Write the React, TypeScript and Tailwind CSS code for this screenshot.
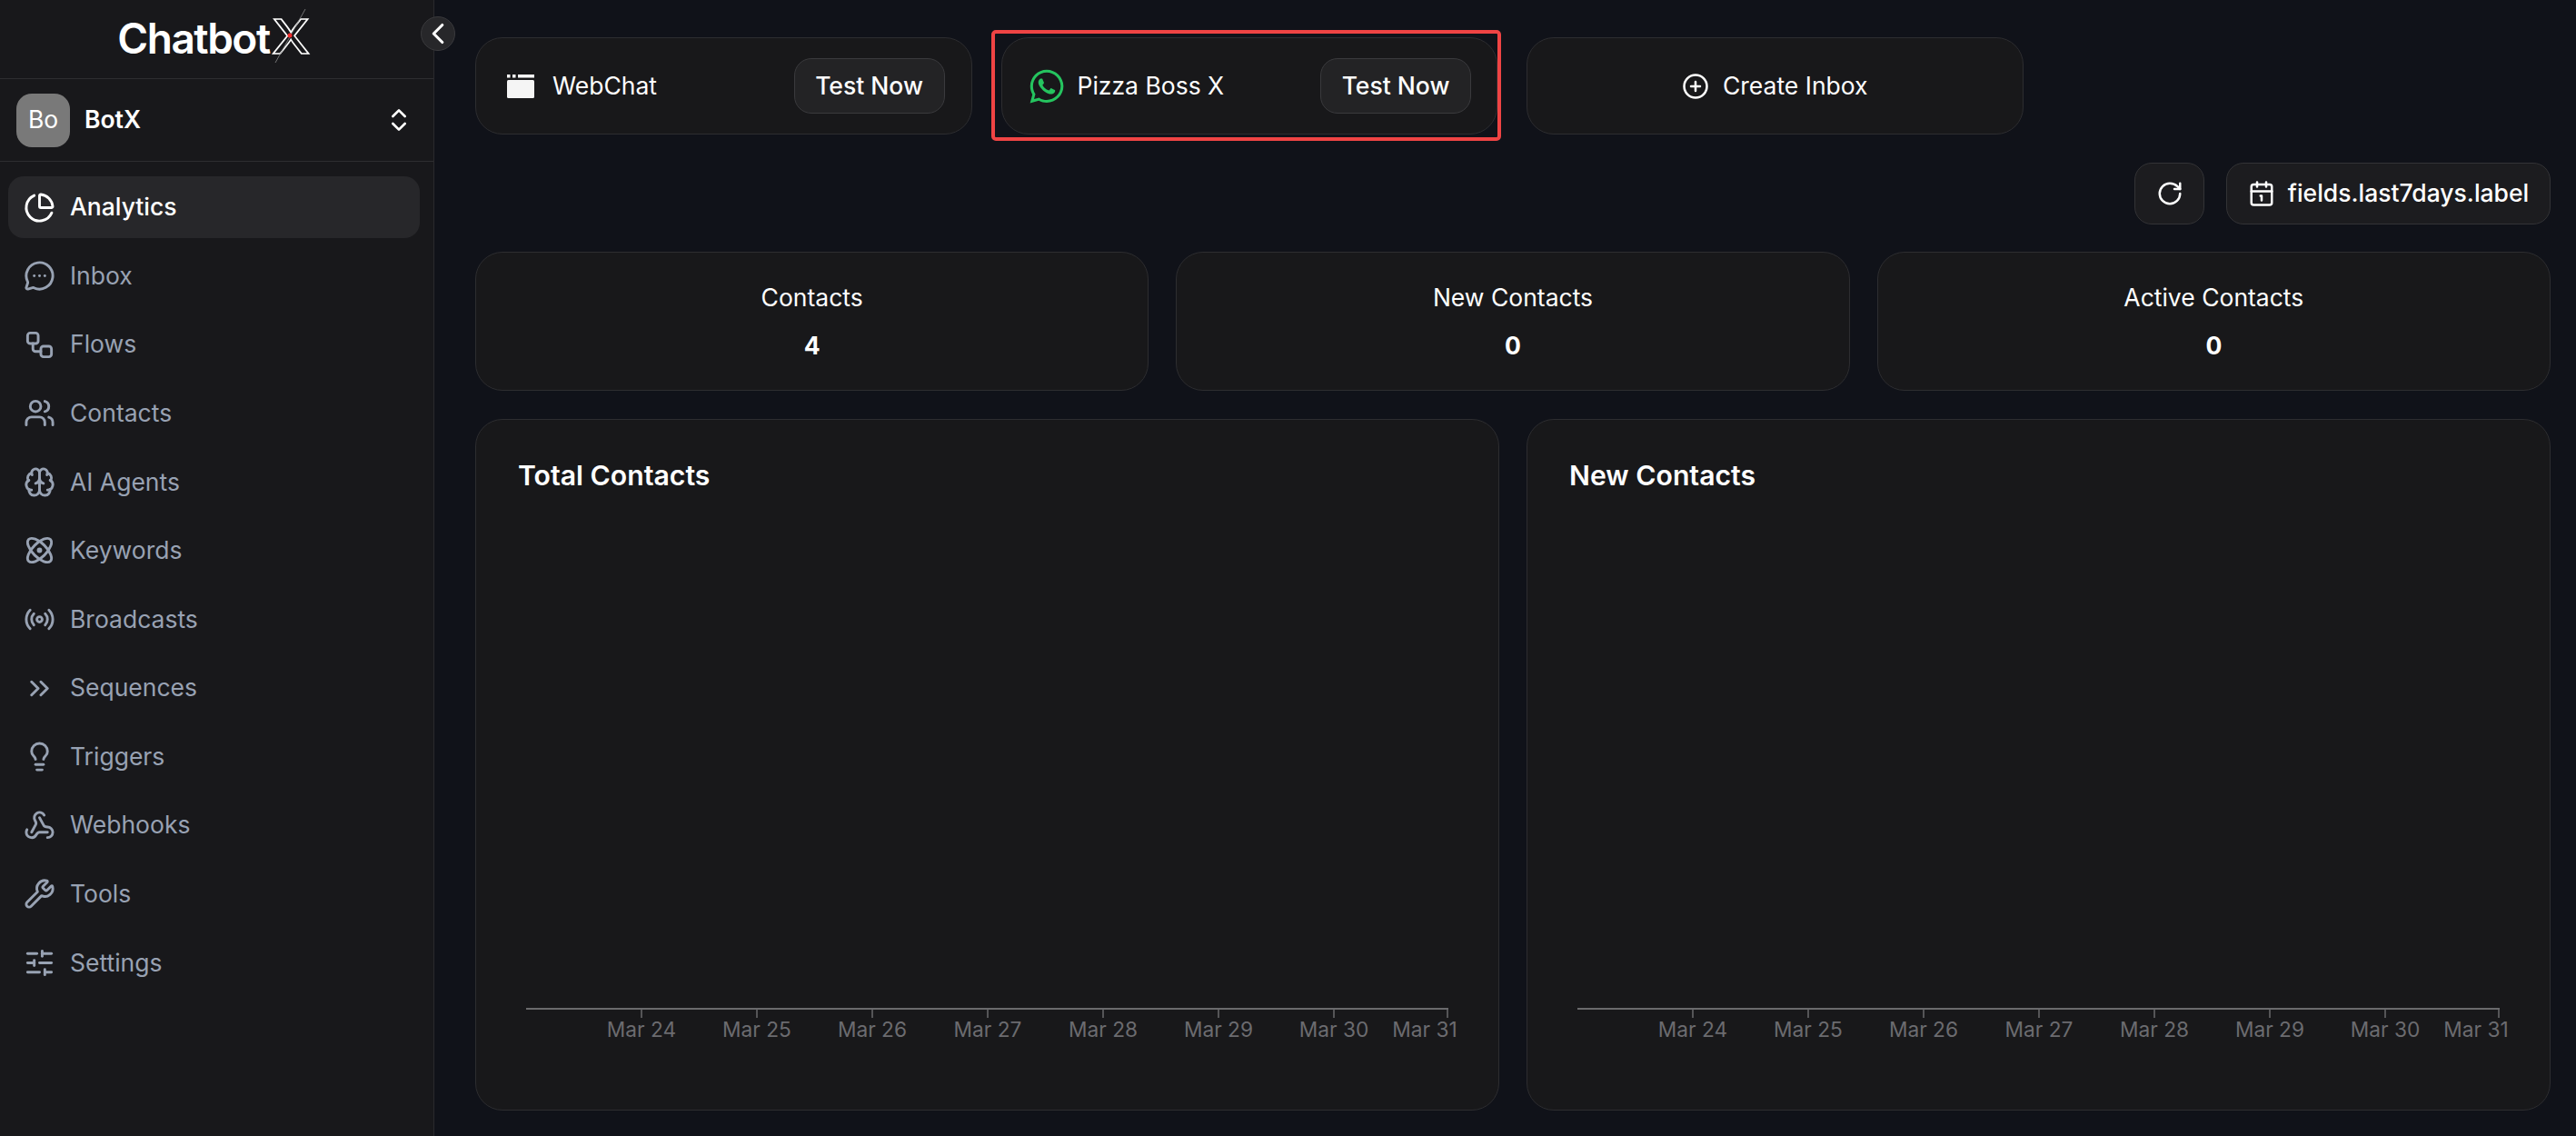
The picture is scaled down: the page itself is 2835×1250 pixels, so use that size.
import {
  Atom,
  Brain,
  Calendar1,
  ChartPie,
  ChevronLeft,
  ChevronsRight,
  ChevronsUpDown,
  CirclePlus,
  Lightbulb,
  MessageCircleMore,
  Radio,
  RotateCw,
  SlidersHorizontal,
  Users,
  Webhook,
  Workflow,
  Wrench,
} from "lucide-react";
import { FaWhatsapp } from "react-icons/fa";

const navItems = [
  { label: "Analytics", icon: ChartPie, active: true },
  { label: "Inbox", icon: MessageCircleMore },
  { label: "Flows", icon: Workflow },
  { label: "Contacts", icon: Users },
  { label: "AI Agents", icon: Brain },
  { label: "Keywords", icon: Atom },
  { label: "Broadcasts", icon: Radio },
  { label: "Sequences", icon: ChevronsRight },
  { label: "Triggers", icon: Lightbulb },
  { label: "Webhooks", icon: Webhook },
  { label: "Tools", icon: Wrench },
  { label: "Settings", icon: SlidersHorizontal },
];

const ticks = [
  { x: 127, label: "Mar 24" },
  { x: 254, label: "Mar 25" },
  { x: 381, label: "Mar 26" },
  { x: 508, label: "Mar 27" },
  { x: 635, label: "Mar 28" },
  { x: 762, label: "Mar 29" },
  { x: 889, label: "Mar 30" },
  { x: 1014, label: "Mar 31", textX: 989 },
];

const Sidebar = () => (
  <aside className="relative flex h-full w-[478px] shrink-0 flex-col border-r border-[#2a2a2d] bg-[#18181b]">
    <div className="flex h-[87px] shrink-0 items-center justify-center border-b border-[#2e2e31] pr-[8px]">
      <div className="relative mb-[4px] flex items-baseline">
        <span className="text-[46px] font-semibold leading-none tracking-[-1.5px] text-white">Chatbot</span>
        <span className="ml-[2px] inline-block w-[41px] text-[52px] font-medium leading-none text-transparent [-webkit-text-stroke:1.5px_#ffffff]">
          <span className="inline-block origin-left scale-x-[1.16]">X</span>
        </span>
        <svg className="absolute right-[-1px] top-[-8px] h-[64px] w-[40px]" viewBox="0 0 40 64" fill="none">
          <path d="M35 3L2 62" stroke="#8a8a8a" strokeWidth="0.8" />
          <circle cx="18" cy="32" r="2.5" fill="#ef2b2b" />
        </svg>
      </div>
    </div>

    <div className="flex h-[91px] shrink-0 items-center border-b border-[#2e2e31] pl-[18px] pr-[22px]">
      <div className="flex h-[59px] w-[59px] items-center justify-center rounded-[17px] bg-[#797979] text-[26.5px] text-white">
        Bo
      </div>
      <span className="ml-[16px] flex-1 text-[26.5px] font-semibold text-white">BotX</span>
      <ChevronsUpDown className="h-[32px] w-[32px] text-white" />
    </div>

    <nav className="flex flex-col gap-[7.6px] pl-[9px] pr-[15px] pt-[16px]">
      {navItems.map((item) => (
        <div
          key={item.label}
          className={`flex h-[68px] items-center gap-[16px] rounded-[17px] pl-[17px] text-[26.5px] ${
            item.active ? "bg-[#27272a] font-medium text-white" : "text-[#98a2b3]"
          }`}
        >
          <item.icon className="h-[35px] w-[35px] shrink-0" strokeWidth={2} />
          <span>{item.label}</span>
        </div>
      ))}
    </nav>

    <button className="absolute left-[463px] top-[18px] flex h-[38px] w-[38px] items-center justify-center rounded-full border border-[#3a3a3d] bg-[#27272a] text-white">
      <ChevronLeft className="h-[38px] w-[38px] shrink-0" strokeWidth={2} />
    </button>
  </aside>
);

const TestButton = () => (
  <button className="flex h-[61px] w-[166px] items-center justify-center rounded-[19px] border border-[#3a3a3d] bg-[#232325] text-[26.5px] font-medium text-white">
    Test Now
  </button>
);

const InboxRow = () => (
  <div className="flex gap-[32px]">
    <div className="flex h-[107px] w-[546.5px] items-center rounded-[30px] border border-[#2d2d30] bg-[#18181a] pl-[33px] pr-[29px]">
      <svg className="h-[26px] w-[32px] shrink-0" viewBox="0 0 32 26" fill="#ffffff">
        <rect x="1" y="0" width="3.5" height="3.5" />
        <rect x="7" y="0" width="3.5" height="3.5" />
        <rect x="13" y="0" width="18" height="3.5" />
        <rect x="1" y="6" width="30" height="20" rx="1.5" fill="#f5f5f5" />
      </svg>
      <span className="ml-[19px] flex-1 text-[26.5px] text-white">WebChat</span>
      <TestButton />
    </div>

    <div className="relative flex h-[107px] w-[546.5px] items-center rounded-[30px] border border-[#2d2d30] bg-[#18181a] pl-[28px] pr-[28px]">
      <FaWhatsapp className="h-[42px] w-[42px] shrink-0 text-[#25c45f]" />
      <span className="ml-[13px] flex-1 text-[26.5px] text-white">Pizza Boss X</span>
      <TestButton />
      <div className="pointer-events-none absolute -bottom-[8px] -left-[12px] -right-[5px] -top-[9px] rounded-[5px] border-[4px] border-[#ef4444]" />
    </div>

    <div className="flex h-[107px] w-[546.5px] items-center justify-center gap-[15px] rounded-[30px] border border-[#2d2d30] bg-[#18181a] text-[26.5px] text-white">
      <CirclePlus className="h-[30px] w-[30px]" />
      <span>Create Inbox</span>
    </div>
  </div>
);

const Toolbar = () => (
  <div className="flex justify-end gap-[24px]">
    <button className="flex h-[68px] w-[77px] items-center justify-center rounded-[19px] border border-[#333336] bg-[#1c1c1f] text-white">
      <RotateCw className="h-[30px] w-[30px]" />
    </button>
    <button className="flex h-[68px] w-[357px] items-center justify-center gap-[14px] rounded-[19px] border border-[#333336] bg-[#1c1c1f] text-[26.5px] font-medium text-white">
      <Calendar1 className="h-[30px] w-[30px]" />
      <span>fields.last7days.label</span>
    </button>
  </div>
);

const StatCard = ({ label, value }: { label: string; value: string }) => (
  <div className="flex h-[153px] flex-1 flex-col items-center justify-center gap-[15px] rounded-[30px] border border-[#2d2d30] bg-[#18181a] text-white">
    <div className="text-[26.5px] leading-[38px]">{label}</div>
    <div className="text-[26.5px] font-bold leading-[38px]">{value}</div>
  </div>
);

const ChartCard = ({ title }: { title: string }) => (
  <div className="flex flex-1 flex-col rounded-[30px] border border-[#2d2d30] bg-[#18181a] pb-[52px] pl-[46px] pt-[42px]">
    <h3 className="text-[30.2px] font-semibold leading-[38px] text-white">{title}</h3>
    <svg className="ml-[9px] mt-auto h-[60px] w-[1016px] overflow-visible" viewBox="0 0 1016 60" fill="none">
      <line x1="0" y1="1" x2="1015" y2="1" stroke="#6a6a6c" strokeWidth="2" />
      {ticks.map((tick) => (
        <g key={tick.label}>
          <line x1={tick.x} y1="1" x2={tick.x} y2="11" stroke="#6a6a6c" strokeWidth="1.5" />
          <text
            x={tick.textX ?? tick.x}
            y="32"
            fill="#6b6b6f"
            fontSize="22.7"
            textAnchor="middle"
          >
            {tick.label}
          </text>
        </g>
      ))}
    </svg>
  </div>
);

const App = () => {
  return (
    <div className="flex h-screen w-full overflow-hidden bg-[#101219] font-['Inter',sans-serif]">
      <Sidebar />
      <main className="flex flex-1 flex-col gap-[30.5px] pb-[28px] pl-[45px] pr-[28px] pt-[41px]">
        <InboxRow />
        <Toolbar />
        <div className="flex gap-[30px]">
          <StatCard label="Contacts" value="4" />
          <StatCard label="New Contacts" value="0" />
          <StatCard label="Active Contacts" value="0" />
        </div>
        <div className="flex min-h-0 flex-1 gap-[30px]">
          <ChartCard title="Total Contacts" />
          <ChartCard title="New Contacts" />
        </div>
      </main>
    </div>
  );
};

export default App;
